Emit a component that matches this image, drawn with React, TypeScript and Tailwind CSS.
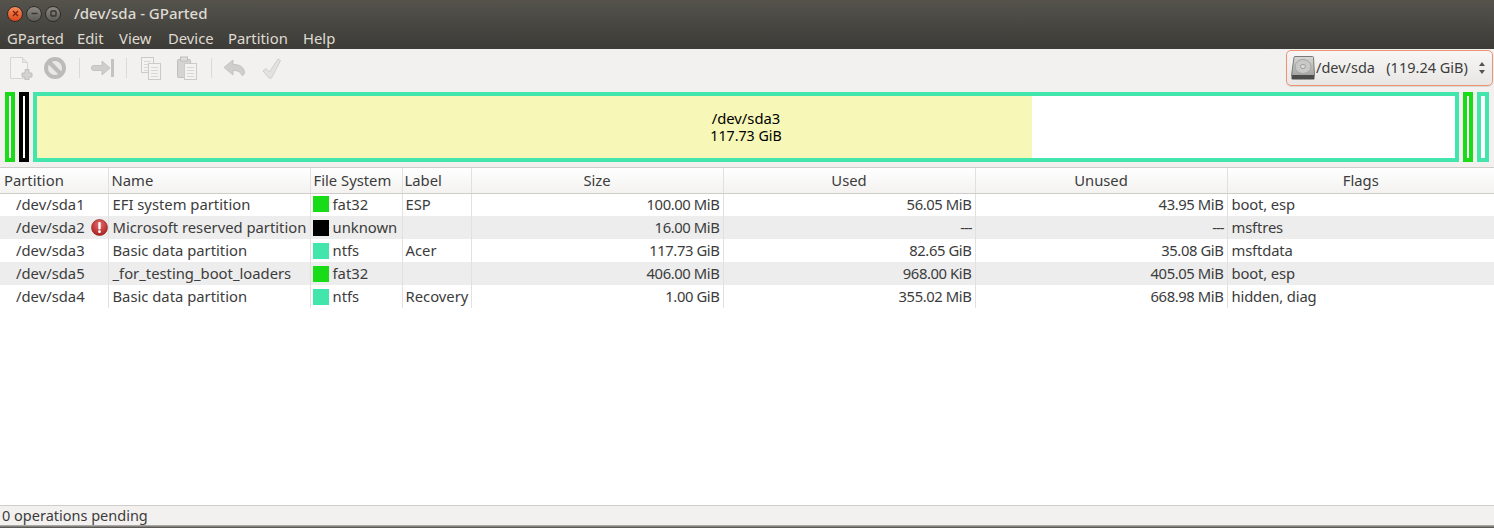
const FONT = "font-['Noto_Sans',sans-serif]";

interface Row {
  path: string;
  warn?: boolean;
  name: string;
  fs: string;
  color: string;
  label: string;
  size: string;
  used: string;
  unused: string;
  flags: string;
}

const rows: Row[] = [
  { path: "/dev/sda1", name: "EFI system partition", fs: "fat32", color: "bg-[#18dc18]", label: "ESP", size: "100.00 MiB", used: "56.05 MiB", unused: "43.95 MiB", flags: "boot, esp" },
  { path: "/dev/sda2", warn: true, name: "Microsoft reserved partition", fs: "unknown", color: "bg-black", label: "", size: "16.00 MiB", used: "---", unused: "---", flags: "msftres" },
  { path: "/dev/sda3", name: "Basic data partition", fs: "ntfs", color: "bg-[#42e5ac]", label: "Acer", size: "117.73 GiB", used: "82.65 GiB", unused: "35.08 GiB", flags: "msftdata" },
  { path: "/dev/sda5", name: "_for_testing_boot_loaders", fs: "fat32", color: "bg-[#18dc18]", label: "", size: "406.00 MiB", used: "968.00 KiB", unused: "405.05 MiB", flags: "boot, esp" },
  { path: "/dev/sda4", name: "Basic data partition", fs: "ntfs", color: "bg-[#42e5ac]", label: "Recovery", size: "1.00 GiB", used: "355.02 MiB", unused: "668.98 MiB", flags: "hidden, diag" },
];

const headers = [
  { title: "Partition", width: "w-[108px]", align: "text-left pl-1" },
  { title: "Name", width: "w-[202px]", align: "text-left pl-[3px]" },
  { title: "File System", width: "w-[92px]", align: "text-left pl-[3px]" },
  { title: "Label", width: "w-[69px]", align: "text-left pl-[2px]" },
  { title: "Size", width: "w-[252px]", align: "text-center" },
  { title: "Used", width: "w-[252px]", align: "text-center" },
  { title: "Unused", width: "w-[252px]", align: "text-center" },
  { title: "Flags", width: "w-[267px]", align: "text-center" },
];

const menus = [
  { title: "GParted", width: "w-[55px]" },
  { title: "Edit", width: "w-[27px]" },
  { title: "View", width: "w-[34px]" },
  { title: "Device", width: "w-[45px]" },
  { title: "Partition", width: "w-[60px]" },
  { title: "Help", width: "w-[32px]" },
];

function WindowButton({ kind }: { kind: "close" | "min" | "max" }) {
  const close = kind === "close";
  return (
    <div
      className={`size-[16px] rounded-full flex items-center justify-center border border-[#2e2d29] ${
        close ? "bg-gradient-to-b from-[#f58a5a] to-[#dc4513]" : "bg-gradient-to-b from-[#8c8a83] to-[#5d5b55]"
      }`}
    >
      <svg width="9" height="9" viewBox="0 0 9 9" fill="none" stroke={close ? "#7a2308" : "#35342f"} strokeWidth="1.4">
        {close && <path d="M2 2l5 5M7 2l-5 5" />}
        {kind === "min" && <path d="M1.5 4.5h6" />}
        {kind === "max" && <rect x="2" y="2" width="5" height="5" rx="1" />}
      </svg>
    </div>
  );
}

function NewIcon() {
  return (
    <svg width="24" height="24" viewBox="0 0 24 24">
      <path d="M1.5 1.5h12l5 5v16h-17z" fill="#f4f3f1" stroke="#d6d5d2" />
      <path d="M13.5 1.5v5h5" fill="#e4e3e0" stroke="#d6d5d2" />
      <path d="M16 13.5h4v3.5h3v4h-3v3h-4v-3h-3v-4h3z" fill="#d4d3d0" stroke="#b8b7b3" strokeWidth=".8" />
    </svg>
  );
}

function DeleteIcon() {
  return (
    <svg width="24" height="24" viewBox="0 0 24 24" fill="none">
      <circle cx="11" cy="12" r="9" fill="#e9e8e6" stroke="#bdbbb8" strokeWidth="4" />
      <path d="M4.8 5.8l12.4 12.4" stroke="#bdbbb8" strokeWidth="4.2" />
    </svg>
  );
}

function ResizeIcon() {
  return (
    <svg width="24" height="24" viewBox="0 0 24 24" fill="none">
      <path d="M2 9.5h9V5l8 7-8 7v-4.5H2a2.7 2.7 0 0 1 0-5z" fill="#cfcecb" stroke="#bfbdba" strokeWidth=".8" strokeLinejoin="round" />
      <rect x="20" y="3" width="3" height="18" fill="#c4c3c0" />
    </svg>
  );
}

function Sheet({ x, y, w = 13, h = 17 }: { x: number; y: number; w?: number; h?: number }) {
  return (
    <g>
      <rect x={x + 0.5} y={y + 0.5} width={w} height={h} fill="#f3f2f0" stroke="#cbcac7" />
      {[4, 7, 10, 13].map((d) => (
        <path key={d} d={`M${x + 3} ${y + d + 0.5}h${w - 5}`} stroke="#d8d7d4" />
      ))}
    </g>
  );
}

function CopyIcon() {
  return (
    <svg width="24" height="24" viewBox="0 0 24 24">
      <Sheet x={1} y={1} h={15} w={12} />
      <Sheet x={8} y={7} h={16} w={12} />
    </svg>
  );
}

function PasteIcon() {
  return (
    <svg width="24" height="24" viewBox="0 0 24 24">
      <rect x="1.5" y="3.5" width="13" height="18" rx="1" fill="#d5d4d1" stroke="#bfbeba" />
      <rect x="4.5" y="1" width="7" height="4" fill="#dfdedb" stroke="#bfbeba" />
      <Sheet x={8} y={7} h={16} w={12} />
    </svg>
  );
}

function UndoIcon() {
  return (
    <svg width="24" height="24" viewBox="0 0 24 24">
      <path d="M10 4L1 11.5 10 19v-4.5c4 0 7 .6 9 5 3-1 3-3 2-5.5-1.6-4-5.5-5.500-11-5.500z" fill="#cfcecb" stroke="#bdbcb8" strokeWidth=".8" strokeLinejoin="round" />
    </svg>
  );
}

function ApplyIcon() {
  return (
    <svg width="24" height="24" viewBox="0 0 24 24">
      <path d="M3 15l3-2.500 3.500 3.500L18 3l2.500 1.500-9 17.500h-2.500z" fill="#e3e2df" stroke="#cfcecb" strokeLinejoin="round" />
    </svg>
  );
}

function DiskIcon() {
  return (
    <svg width="24" height="24" viewBox="0 0 24 24" className="shrink-0">
      <defs>
        <linearGradient id="disk" x1="0" y1="0" x2="0" y2="1">
          <stop offset="0" stopColor="#d8d8d6" />
          <stop offset="1" stopColor="#a3a3a0" />
        </linearGradient>
      </defs>
      <path d="M4 .5h17.500a1 1 0 0 1 1 1L23.500 19.500H.5L3 1.500a1 1 0 0 1 1-1z" fill="url(#disk)" stroke="#7a7a78" />
      <rect x=".5" y="19" width="23" height="4.500" rx="1" fill="#4c4c4a" />
      <ellipse cx="12" cy="10.500" rx="8" ry="7" fill="#c8c8c6" stroke="#a5a5a3" />
      <ellipse cx="12" cy="10.500" rx="2.500" ry="2" fill="#dededc" stroke="#9a9a98" />
    </svg>
  );
}

function WarnIcon() {
  return (
    <svg width="17" height="17" viewBox="0 0 17 17" className="shrink-0">
      <defs>
        <radialGradient id="warn" cx="0.5" cy="0.3" r="0.8">
          <stop offset="0" stopColor="#e66a6a" />
          <stop offset="1" stopColor="#a31616" />
        </radialGradient>
      </defs>
      <circle cx="8.500" cy="8.500" r="8" fill="url(#warn)" stroke="#8c1a1a" strokeWidth=".6" />
      <rect x="7.300" y="3" width="2.400" height="7.400" rx="1" fill="#fff" />
      <circle cx="8.500" cy="12.700" r="1.400" fill="#fff" />
    </svg>
  );
}

function Sep() {
  return <div className="w-px h-5 bg-[#dcdad6]" />;
}

function ThinPart({ border, width = "w-[10px]" }: { border: string; width?: string }) {
  return <div className={`${width} shrink-0 h-full border-4 ${border} bg-white`} />;
}

function Dim({ value }: { value: string }) {
  return value === "---" ? <span className="tracking-[-1px]">{value}</span> : <>{value}</>;
}

export default function App() {
  return (
    <div className={`${FONT} w-[1494px] h-[528px] flex flex-col overflow-hidden bg-[#f2f1f0] text-[14.5px] text-[#3c3c3c]`}>
      {/* title bar + menu */}
      <div className="h-[49px] shrink-0 bg-gradient-to-b from-[#55534c] to-[#3c3b37] text-[#dfdbd2]">
        <div className="h-[27px] flex items-center pl-[7px]">
          <div className="flex gap-[3px] items-center">
            <WindowButton kind="close" />
            <WindowButton kind="min" />
            <WindowButton kind="max" />
          </div>
          <span className="ml-[13px] font-medium text-[#dfdbd2] text-[15px]">/dev/sda - GParted</span>
        </div>
        <div className="h-[22px] flex items-center pl-[7px] gap-[15px] leading-none text-[14.8px] whitespace-nowrap">
          {menus.map((m) => (
            <span key={m.title} className={m.width}>
              {m.title}
            </span>
          ))}
        </div>
      </div>

      {/* toolbar */}
      <div className="h-[39px] shrink-0 flex items-center pl-[9px] pr-[1px]">
        <div className="flex items-center gap-[11px] -mt-[2px]">
          <NewIcon />
          <DeleteIcon />
          <Sep />
          <ResizeIcon />
          <Sep />
          <div className="ml-[2px] flex">
            <CopyIcon />
          </div>
          <div className="ml-[1px] flex">
            <PasteIcon />
          </div>
          <Sep />
          <UndoIcon />
          <div className="ml-[2px] flex">
            <ApplyIcon />
          </div>
        </div>
        <div className="ml-auto w-[207px] h-[36px] -mt-[2px] rounded-[5px] border border-[#ec9472] bg-gradient-to-b from-[#f7f6f5] to-[#e8e7e5] flex items-center pl-[4px] pr-[6px] shadow-[0_1px_1px_rgba(0,0,0,0.1)]">
          <DiskIcon />
          <span className="whitespace-pre ml-[1px]">/dev/sda   (119.24 GiB)</span>
          <svg width="8" height="14" viewBox="0 0 8 14" className="ml-auto" fill="#55534f">
            <path d="M4 1L7 5H1zM4 13L1 9h6z" />
          </svg>
        </div>
      </div>

      {/* partition graph */}
      <div className="h-[70px] mt-[4px] shrink-0 flex pl-[5px] gap-[4px]">
        <ThinPart border="border-[#18dc18]" />
        <ThinPart border="border-black" />
        <div className="w-[1426px] shrink-0 h-full border-4 border-[#42e5ac] bg-white relative">
          <div className="w-[995px] h-full bg-[#f7f7b8]" />
          <div className="absolute inset-0 flex flex-col items-center justify-center text-black leading-[17px] pb-[1px]">
            <span className="text-[14.8px]">/dev/sda3</span>
            <span className="text-[14.2px]">117.73 GiB</span>
          </div>
        </div>
        <ThinPart border="border-[#18dc18]" />
        <ThinPart border="border-[#42e5ac]" width="w-[12px]" />
      </div>

      {/* partition list */}
      <div className="flex-1 mt-[5px] min-h-0 bg-white border-t border-[#cfcdca] overflow-hidden">
        <table className="table-fixed w-[1494px] border-collapse text-[14.8px]">
          <thead>
            <tr className="h-[25px] bg-gradient-to-b from-white to-[#f3f2f1]">
              {headers.map((h, i) => (
                <th
                  key={h.title}
                  className={`${h.width} ${h.align} font-normal p-0 pb-[1px] border-b border-[#cfcdca] ${i > 0 ? "border-l border-l-[#e3e1de]" : ""}`}
                >
                  {h.title}
                </th>
              ))}
            </tr>
          </thead>
          <tbody>
            {rows.map((r, i) => (
              <tr
                key={r.path}
                className={`h-[23px] ${i % 2 === 1 ? "bg-[#ededed]" : "bg-white"} ${i === 0 ? "leading-5 [&>td]:pb-[2px]" : ""}`}
              >
                <td className="p-0 pl-[16px]">
                  <div className="flex items-center justify-between">
                    <span>{r.path}</span>
                    {r.warn && <WarnIcon />}
                  </div>
                </td>
                <td className="p-0 pl-[4px] border-l border-[#e3e1de] whitespace-nowrap">{r.name}</td>
                <td className="p-0 pl-[2px] border-l border-[#e3e1de]">
                  <div className="flex items-center gap-[4px]">
                    <div className={`w-[16px] h-[16px] ${r.color}`} />
                    <span>{r.fs}</span>
                  </div>
                </td>
                <td className="p-0 pl-[3px] border-l border-[#e3e1de]">{r.label}</td>
                <td className="p-0 pr-[3px] text-right tracking-[-0.4px] border-l border-[#e3e1de]">{r.size}</td>
                <td className="p-0 pr-[3px] text-right tracking-[-0.4px] border-l border-[#e3e1de]"><Dim value={r.used} /></td>
                <td className="p-0 pr-[3px] text-right tracking-[-0.4px] border-l border-[#e3e1de]"><Dim value={r.unused} /></td>
                <td className="p-0 pl-[4px] tracking-[-0.15px] border-l border-[#e3e1de]">{r.flags}</td>
              </tr>
            ))}
          </tbody>
        </table>
      </div>

      {/* status bar */}
      <div className="h-[20px] shrink-0 border-t border-[#cfcdca] pl-[2px] flex items-center leading-none">
        0 operations pending
      </div>
      <div className="h-[3px] shrink-0 bg-gradient-to-b from-[#bdbcba] to-[#4a4945]" />
    </div>
  );
}
